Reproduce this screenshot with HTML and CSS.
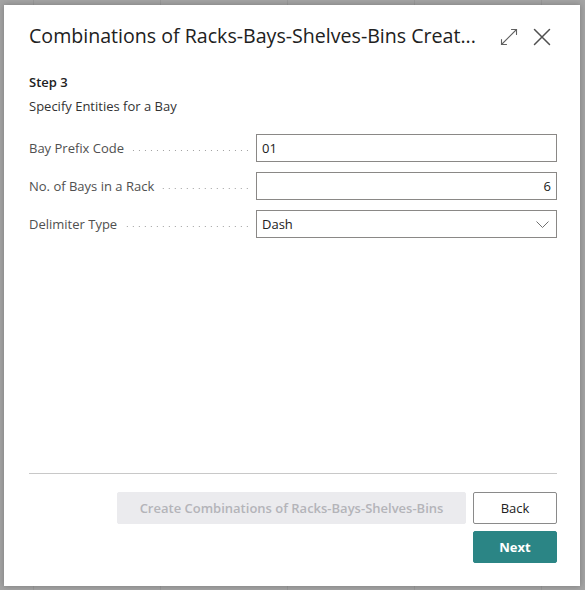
FILE: index.html
```html
<!DOCTYPE html>
<html lang="en">
<head>
<meta charset="utf-8">
<title>Combinations of Racks-Bays-Shelves-Bins</title>
<link rel="stylesheet" href="styles.css">
</head>
<body>
<div class="dialog">
  <div class="header">
    <h1 class="title">Combinations of Racks-Bays-Shelves-Bins Creat...</h1>
    <div class="header-actions">
      <span class="icon-btn" aria-label="Expand">
        <svg width="18" height="18" viewBox="0 0 18 18" fill="none" stroke="#606060" stroke-width="1.1" stroke-linecap="round">
          <path d="M1.5 16.5 L16.5 1.5"/>
          <path d="M11.5 1.5 H16.5 V6.5"/>
          <path d="M1.5 11.5 V16.5 H6.5"/>
        </svg>
      </span>
      <span class="icon-btn" aria-label="Close">
        <svg width="18" height="18" viewBox="0 0 18 18" fill="none" stroke="#505050" stroke-width="1.5" stroke-linecap="round">
          <path d="M1.5 1.5 L16.5 16.5 M16.5 1.5 L1.5 16.5"/>
        </svg>
      </span>
    </div>
  </div>
  <div class="body">
    <div class="step">Step 3</div>
    <div class="instructions">Specify Entities for a Bay</div>
    <div class="fields">
      <div class="field">
        <label class="label"><span>Bay Prefix Code</span><span class="leader"></span></label>
        <div class="input">01</div>
      </div>
      <div class="field">
        <label class="label"><span>No. of Bays in a Rack</span><span class="leader"></span></label>
        <div class="input num">6</div>
      </div>
      <div class="field">
        <label class="label"><span>Delimiter Type</span><span class="leader"></span></label>
        <div class="input select"><span>Dash</span>
          <svg width="13" height="7" viewBox="0 0 13 7" fill="none" stroke="#707070" stroke-width="1"><path d="M0.5 0.5 L6.5 6.5 L12.5 0.5"/></svg>
        </div>
      </div>
    </div>
  </div>
  <div class="footer">
    <button class="btn disabled" disabled>Create Combinations of Racks-Bays-Shelves-Bins</button>
    <div class="btn-col">
      <button class="btn secondary">Back</button>
      <button class="btn primary">Next</button>
    </div>
  </div>
</div>
</body>
</html>
```

FILE: styles.css
```css
* { box-sizing: border-box; }
html, body { margin: 0; padding: 0; }
body {
  width: 585px;
  height: 590px;
  overflow: hidden;
  background-color: #a4a4a4;
  background-image: repeating-linear-gradient(to right, transparent 0, transparent 33px, #999 33px, #999 34px, transparent 34px, transparent 127px);
  font-family: "Segoe UI", "Open Sans", "Noto Sans", sans-serif;
  padding: 5px 0 0 4px;
}
.dialog {
  width: 576px;
  height: 581px;
  background: #fff;
  box-shadow: 0 0 6px rgba(0,0,0,0.25);
  display: flex;
  flex-direction: column;
  padding: 17px 23px 23px 25px;
  color: #212121;
}
.header {
  display: flex;
  align-items: center;
}
.title {
  margin: 0;
  font-size: 19.6px;
  font-weight: 400;
  line-height: 28px;
  white-space: nowrap;
  flex: 0 0 471px;
  color: #212121;
}
.header-actions {
  display: flex;
  align-items: center;
  gap: 15px;
  margin-top: 1px;
}
.icon-btn { display: flex; width: 18px; height: 18px; }
.step {
  margin-top: 23px;
  font-size: 13px;
  font-weight: 600;
  line-height: 18px;
}
.instructions {
  margin-top: 6px;
  font-size: 13px;
  line-height: 18px;
  color: #333;
}
.fields {
  margin-top: 19px;
  display: flex;
  flex-direction: column;
  gap: 10px;
}
.field {
  display: grid;
  grid-template-columns: 227px 301px;
  align-items: center;
}
.label {
  display: flex;
  align-items: center;
  font-size: 13px;
  color: #505050;
  white-space: nowrap;
  padding-right: 8px;
}
.leader {
  flex: 1;
  height: 1px;
  margin: 4px 0 0 6px;
  background-image: linear-gradient(to left, #a0a0a0 1px, transparent 1px);
  background-size: 6px 1px;
  background-repeat: repeat-x;
  background-position: right;
}
.input {
  height: 28px;
  border: 1px solid #8a8886;
  padding: 0 5px;
  font-size: 13px;
  line-height: 26px;
  color: #212121;
}
.input.num { text-align: right; }
.input.select {
  display: flex;
  align-items: center;
  justify-content: space-between;
  padding-right: 7px;
}
.footer {
  margin-top: auto;
  border-top: 1px solid #c8c8c8;
  padding-top: 18px;
  display: flex;
  justify-content: flex-end;
  align-items: flex-start;
  gap: 7px;
}
.btn-col {
  display: flex;
  flex-direction: column;
  gap: 7px;
}
.btn {
  font-family: inherit;
  height: 32px;
  font-size: 13px;
  font-weight: 600;
  border-radius: 2px;
  padding: 0 10px;
  cursor: pointer;
}
.btn.disabled {
  width: 349px;
  background: #ebebee;
  border: 1px solid #ebebee;
  color: #b4b4b9;
}
.btn.secondary {
  width: 84px;
  background: #fff;
  border: 1px solid #8a8a8a;
  color: #212121;
  font-weight: 400;
}
.btn.primary {
  width: 84px;
  background: #2b8585;
  border: 1px solid #2b8585;
  color: #fff;
  font-weight: 700;
}
```
